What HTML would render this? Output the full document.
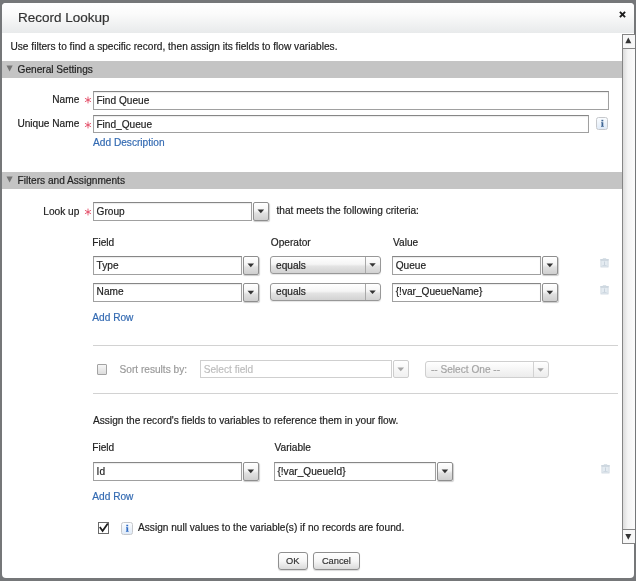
<!DOCTYPE html>
<html lang="en"><head><meta charset="utf-8"><title>Record Lookup</title>
<style>
html,body{margin:0;padding:0}
body{width:636px;height:581px;overflow:hidden;background:#757779;position:relative;font-family:"Liberation Sans",sans-serif}
#dlg{position:absolute;left:2.2px;top:2.5px;width:632.2px;height:575.2px;background:#fff;border-radius:4px;overflow:hidden}
#hdr{position:absolute;left:0;top:0;width:100%;height:30.5px;background:linear-gradient(#ffffff,#fbfbfb 35%,#e8eaeb)}
#w{position:absolute;left:-10px;top:-10px;width:656px;height:601px;background:#757779;filter:blur(.35px)}
#c{position:absolute;left:10px;top:10px;width:636px;height:581px}
.t{position:absolute;white-space:nowrap;line-height:14px;-webkit-text-stroke:0.18px}
.ab{position:absolute}
.bar{position:absolute;left:2px;width:620.3px;background:#c4c4c4}
.inp{position:absolute;box-sizing:border-box;border:1px solid #a0a0a0;border-top-color:#868686;background:#fff;box-shadow:inset 0 1px 1px rgba(0,0,0,.08)}
.inp.dis{border-color:#cfcfcf;box-shadow:none}
.ddb{position:absolute;box-sizing:border-box;border:1px solid #8e8e8e;border-radius:2px;background:linear-gradient(#ffffff,#f4f4f4 45%,#e0e0e0 60%,#cfcfcf);box-shadow:0.5px 1px 1px rgba(0,0,0,.2)}
.ddb.dis{border-color:#cdcdcd;background:linear-gradient(#fff,#f0f0f0);box-shadow:none}
.sel{position:absolute;box-sizing:border-box;border:1px solid #989898;border-radius:3px;background:linear-gradient(#ffffff,#f5f5f5 45%,#e3e3e3 58%,#d2d2d2);box-shadow:0 1px 1px rgba(0,0,0,.1)}
.sel.dis{border-color:#cfcfcf;background:linear-gradient(#fff,#ececec);box-shadow:none}
.sel .sep{position:absolute;top:0;bottom:0;width:1px;background:#a8a8a8}
.sel.dis .sep{background:#d2d2d2}
.hr{position:absolute;left:93px;width:525.3px;height:1px;background:#d2d2d2}
.cb{position:absolute;box-sizing:border-box;border:1px solid #a3a3a3;border-radius:1px;background:linear-gradient(#f6f6f6,#dddddd)}
.cbk{position:absolute;box-sizing:border-box;border:1px solid #6a6a6a;background:#fff}
.info{position:absolute;box-sizing:border-box;border:1px solid #c6c8cc;border-radius:2.5px;background:linear-gradient(#fbfdff,#dfeaf7)}
.pb{position:absolute;box-sizing:border-box;border:1px solid #8f8f8f;border-radius:3px;background:linear-gradient(#ffffff,#f6f6f6 50%,#dadada);box-shadow:0 1px 1px rgba(0,0,0,.15)}
#sb{position:absolute;left:622px;top:34px;width:12.5px;height:510px;box-sizing:border-box;border:1px solid #858585;border-right:none;background:linear-gradient(90deg,#dcdcdc,#f4f4f4 40%,#fbfbfb)}
.sbb{position:absolute;left:0;width:100%;height:13.6px;box-sizing:border-box;background:#f7f7f7}
.sbb:first-child{border-bottom:1px solid #858585}
.sbb:nth-child(2){border-top:1px solid #858585}
</style></head>
<body>
<div id="w"><div id="c">
<div id="dlg">
<div id="hdr"></div>
</div>
<div class="t" style="left:18.00px;top:10.62px;font-size:13.5px;color:#333;">Record Lookup</div>
<svg class="ab" style="left:617.7px;top:10.3px" width="9" height="9" viewBox="-4.5 -4.5 9 9"><g stroke="#1c1c1c" stroke-width="1.9"><line x1="-2.6" y1="-2.6" x2="2.6" y2="2.6"/><line x1="-2.6" y1="2.6" x2="2.6" y2="-2.6"/></g></svg>
<div id="sb"><div class="sbb" style="top:0"></div><div class="sbb" style="bottom:0"></div><svg class="ab" style="left:-1px;top:-1px" width="12" height="510"><polygon points="6.3,3.6 9.3,9.2 3.3,9.2" fill="#333"/><polygon points="3.3,500 9.3,500 6.3,505.7" fill="#333"/></svg></div>
<div class="t" style="left:10.50px;top:39.78px;font-size:10.15px;color:#222;">Use filters to find a specific record, then assign its fields to flow variables.</div>
<div class="bar" style="top:61.10px;height:16.60px"></div><svg class="ab" style="left:5.5px;top:64.70px" width="8" height="8"><polygon points="0.5,0.5 6.7,0.5 3.6,6.6" fill="#747474"/></svg><div class="t" style="left:17.50px;top:62.78px;font-size:10.15px;color:#222;">General Settings</div>
<div class="t" style="right:556.70px;top:92.78px;font-size:10.15px;color:#222;">Name</div>
<svg class="ab" style="left:83.50px;top:96.20px" width="8" height="8" viewBox="-4 -4 8 8"><g stroke="#e2405c" stroke-width="0.85" stroke-linecap="round"><line x1="0" y1="-3" x2="0" y2="3"/><line x1="-2.7" y1="-1.55" x2="2.7" y2="1.55"/><line x1="-2.7" y1="1.55" x2="2.7" y2="-1.55"/></g></svg>
<div class="inp" style="left:93.00px;top:91.20px;width:515.70px;height:18.50px"></div><div class="t" style="left:96.40px;top:93.78px;font-size:10.15px;color:#222;">Find Queue</div>
<div class="t" style="right:556.70px;top:116.78px;font-size:10.15px;color:#222;">Unique Name</div>
<svg class="ab" style="left:83.50px;top:120.80px" width="8" height="8" viewBox="-4 -4 8 8"><g stroke="#e2405c" stroke-width="0.85" stroke-linecap="round"><line x1="0" y1="-3" x2="0" y2="3"/><line x1="-2.7" y1="-1.55" x2="2.7" y2="1.55"/><line x1="-2.7" y1="1.55" x2="2.7" y2="-1.55"/></g></svg>
<div class="inp" style="left:93.00px;top:114.90px;width:496.20px;height:18.60px"></div><div class="t" style="left:96.40px;top:117.78px;font-size:10.15px;color:#222;">Find_Queue</div>
<div class="info" style="left:595.90px;top:117.30px;width:12.5px;height:12.5px"><svg width="12.5" height="12.5" viewBox="0 0 12 12" style="position:absolute;left:-1px;top:-1px"><rect x="5.2" y="2.7" width="1.8" height="1.5" fill="#3f6694"/><path d="M4.9 5.1h2.1v3.6h0.5v0.7H4.8v-0.7h0.5V5.8H4.9z" fill="#3f6694"/></svg></div>
<div class="t" style="left:93.10px;top:135.78px;font-size:10.15px;color:#336ab2;">Add Description</div>
<div class="bar" style="top:172.00px;height:16.70px"></div><svg class="ab" style="left:5.5px;top:175.60px" width="8" height="8"><polygon points="0.5,0.5 6.7,0.5 3.6,6.6" fill="#747474"/></svg><div class="t" style="left:17.50px;top:173.78px;font-size:10.15px;color:#222;">Filters and Assignments</div>
<div class="t" style="right:556.70px;top:204.78px;font-size:10.15px;color:#222;">Look up</div>
<svg class="ab" style="left:83.50px;top:208.30px" width="8" height="8" viewBox="-4 -4 8 8"><g stroke="#e2405c" stroke-width="0.85" stroke-linecap="round"><line x1="0" y1="-3" x2="0" y2="3"/><line x1="-2.7" y1="-1.55" x2="2.7" y2="1.55"/><line x1="-2.7" y1="1.55" x2="2.7" y2="-1.55"/></g></svg>
<div class="inp" style="left:93.20px;top:202.40px;width:159.10px;height:18.30px"></div><div class="t" style="left:96.60px;top:204.78px;font-size:10.15px;color:#222;">Group</div>
<div class="ddb" style="left:253.40px;top:202.40px;width:15.70px;height:18.30px"><svg width="15.70" height="18.30" style="position:absolute;left:-1px;top:-1px"><polygon points="4.55,7.55 11.15,7.55 7.85,11.25" fill="#333"/></svg></div>
<div class="t" style="left:276.50px;top:203.78px;font-size:10.15px;color:#222;">that meets the following criteria:</div>
<div class="t" style="left:92.30px;top:235.78px;font-size:10.15px;color:#222;">Field</div>
<div class="t" style="left:270.75px;top:235.78px;font-size:10.15px;color:#222;">Operator</div>
<div class="t" style="left:393.00px;top:235.78px;font-size:10.15px;color:#222;">Value</div>
<div class="inp" style="left:93.20px;top:256.25px;width:148.40px;height:18.25px"></div><div class="t" style="left:96.60px;top:258.78px;font-size:10.15px;color:#222;">Type</div>
<div class="ddb" style="left:243.00px;top:256.25px;width:15.60px;height:18.25px"><svg width="15.60" height="18.25" style="position:absolute;left:-1px;top:-1px"><polygon points="4.50,7.53 11.10,7.53 7.80,11.23" fill="#333"/></svg></div>
<div class="sel" style="left:270.20px;top:256.35px;width:110.40px;height:17.45px"><div class="sep" style="left:93.70px"></div><svg width="110.40" height="17.45" style="position:absolute;left:-1px;top:-1px"><polygon points="99.35,7.22 105.75,7.22 102.55,10.72" fill="#333"/></svg></div><div class="t" style="left:276.10px;top:258.78px;font-size:10.15px;color:#222;">equals</div>
<div class="inp" style="left:392.30px;top:256.25px;width:149.20px;height:18.25px"></div><div class="t" style="left:395.70px;top:258.78px;font-size:10.15px;color:#222;">Queue</div>
<div class="ddb" style="left:542.40px;top:256.25px;width:15.70px;height:18.25px"><svg width="15.70" height="18.25" style="position:absolute;left:-1px;top:-1px"><polygon points="4.55,7.53 11.15,7.53 7.85,11.23" fill="#333"/></svg></div>
<svg class="ab" style="left:600.10px;top:258.05px" width="9" height="10" viewBox="0 0 9 10"><rect x="0.2" y="1" width="8.6" height="1.5" fill="#ccd6df"/><rect x="2.8" y="0.1" width="3.4" height="1.1" fill="#d8e0e7"/><rect x="0.9" y="2.5" width="7.2" height="6.5" fill="#e4ebf1" stroke="#cbd5de" stroke-width="0.8"/><rect x="4" y="3.5" width="0.9" height="4" fill="#c6d1db"/><rect x="2.4" y="7.0" width="4.2" height="0.9" fill="#ccd6df"/></svg>
<div class="inp" style="left:93.20px;top:282.80px;width:148.40px;height:18.80px"></div><div class="t" style="left:96.60px;top:284.78px;font-size:10.15px;color:#222;">Name</div>
<div class="ddb" style="left:243.00px;top:282.80px;width:15.60px;height:18.80px"><svg width="15.60" height="18.80" style="position:absolute;left:-1px;top:-1px"><polygon points="4.50,7.80 11.10,7.80 7.80,11.50" fill="#333"/></svg></div>
<div class="sel" style="left:270.20px;top:282.90px;width:110.40px;height:18.00px"><div class="sep" style="left:93.70px"></div><svg width="110.40" height="18.00" style="position:absolute;left:-1px;top:-1px"><polygon points="99.35,7.50 105.75,7.50 102.55,11.00" fill="#333"/></svg></div><div class="t" style="left:276.10px;top:284.78px;font-size:10.15px;color:#222;">equals</div>
<div class="inp" style="left:392.30px;top:282.80px;width:149.20px;height:18.80px"></div><div class="t" style="left:395.70px;top:284.78px;font-size:10.15px;color:#222;">{!var_QueueName}</div>
<div class="ddb" style="left:542.40px;top:282.80px;width:15.70px;height:18.80px"><svg width="15.70" height="18.80" style="position:absolute;left:-1px;top:-1px"><polygon points="4.55,7.80 11.15,7.80 7.85,11.50" fill="#333"/></svg></div>
<svg class="ab" style="left:600.10px;top:284.60px" width="9" height="10" viewBox="0 0 9 10"><rect x="0.2" y="1" width="8.6" height="1.5" fill="#ccd6df"/><rect x="2.8" y="0.1" width="3.4" height="1.1" fill="#d8e0e7"/><rect x="0.9" y="2.5" width="7.2" height="6.5" fill="#e4ebf1" stroke="#cbd5de" stroke-width="0.8"/><rect x="4" y="3.5" width="0.9" height="4" fill="#c6d1db"/><rect x="2.4" y="7.0" width="4.2" height="0.9" fill="#ccd6df"/></svg>
<div class="t" style="left:92.30px;top:310.78px;font-size:10.15px;color:#336ab2;">Add Row</div>
<div class="hr" style="top:345.3px"></div>
<div class="cb" style="left:96.5px;top:364.1px;width:10.9px;height:10.8px"></div>
<div class="t" style="left:119.50px;top:362.78px;font-size:10.15px;color:#9a9a9a;">Sort results by:</div>
<div class="inp dis" style="left:200.30px;top:360.00px;width:191.50px;height:18.10px"></div><div class="t" style="left:203.70px;top:362.78px;font-size:10.15px;color:#bdbdbd;">Select field</div>
<div class="ddb dis" style="left:393.00px;top:360.00px;width:15.50px;height:18.10px"><svg width="15.50" height="18.10" style="position:absolute;left:-1px;top:-1px"><polygon points="4.45,7.45 11.05,7.45 7.75,11.15" fill="#a6a6a6"/></svg></div>
<div class="sel dis" style="left:425.00px;top:360.60px;width:123.50px;height:17.60px"><div class="sep" style="left:106.60px"></div><svg width="123.50" height="17.60" style="position:absolute;left:-1px;top:-1px"><polygon points="112.35,7.30 118.75,7.30 115.55,10.80" fill="#a6a6a6"/></svg></div><div class="t" style="left:430.90px;top:362.78px;font-size:10.15px;color:#a4a4a4;">-- Select One --</div>
<div class="hr" style="top:393.3px"></div>
<div class="t" style="left:93.00px;top:413.78px;font-size:10.15px;color:#222;">Assign the record's fields to variables to reference them in your flow.</div>
<div class="t" style="left:92.30px;top:440.78px;font-size:10.15px;color:#222;">Field</div>
<div class="t" style="left:274.50px;top:440.78px;font-size:10.15px;color:#222;">Variable</div>
<div class="inp" style="left:93.20px;top:462.25px;width:148.40px;height:18.25px"></div><div class="t" style="left:96.60px;top:464.78px;font-size:10.15px;color:#222;">Id</div>
<div class="ddb" style="left:243.00px;top:462.25px;width:15.60px;height:18.25px"><svg width="15.60" height="18.25" style="position:absolute;left:-1px;top:-1px"><polygon points="4.50,7.53 11.10,7.53 7.80,11.23" fill="#333"/></svg></div>
<div class="inp" style="left:274.00px;top:462.25px;width:161.60px;height:18.25px"></div><div class="t" style="left:277.40px;top:464.78px;font-size:10.15px;color:#222;">{!var_QueueId}</div>
<div class="ddb" style="left:437.00px;top:462.25px;width:15.80px;height:18.25px"><svg width="15.80" height="18.25" style="position:absolute;left:-1px;top:-1px"><polygon points="4.60,7.53 11.20,7.53 7.90,11.23" fill="#333"/></svg></div>
<svg class="ab" style="left:600.80px;top:464.05px" width="9" height="10" viewBox="0 0 9 10"><rect x="0.2" y="1" width="8.6" height="1.5" fill="#ccd6df"/><rect x="2.8" y="0.1" width="3.4" height="1.1" fill="#d8e0e7"/><rect x="0.9" y="2.5" width="7.2" height="6.5" fill="#e4ebf1" stroke="#cbd5de" stroke-width="0.8"/><rect x="4" y="3.5" width="0.9" height="4" fill="#c6d1db"/><rect x="2.4" y="7.0" width="4.2" height="0.9" fill="#ccd6df"/></svg>
<div class="t" style="left:92.30px;top:489.78px;font-size:10.15px;color:#336ab2;">Add Row</div>
<div class="cbk" style="left:97.6px;top:522.1px;width:11.5px;height:11.6px"></div><svg class="ab" style="left:97px;top:519px" width="16" height="16"><polyline points="2.8,8 5.6,11.9 10.8,4.4" fill="none" stroke="#1e1e1e" stroke-width="1.8"/></svg>
<div class="info" style="left:120.50px;top:522.40px;width:12.3px;height:12.3px"><svg width="12.3" height="12.3" viewBox="0 0 12 12" style="position:absolute;left:-1px;top:-1px"><rect x="5.2" y="2.7" width="1.8" height="1.5" fill="#2f6bc4"/><path d="M4.9 5.1h2.1v3.6h0.5v0.7H4.8v-0.7h0.5V5.8H4.9z" fill="#2f6bc4"/></svg></div>
<div class="t" style="left:138.00px;top:520.78px;font-size:10.15px;color:#222;">Assign null values to the variable(s) if no records are found.</div>
<div class="pb" style="left:277.90px;top:552.10px;width:29.90px;height:17.70px"></div><div class="t" style="left:0.00px;top:554.08px;font-size:9.3px;color:#333;left:277.90px;width:29.90px;text-align:center">OK</div>
<div class="pb" style="left:313.20px;top:552.10px;width:46.40px;height:17.70px"></div><div class="t" style="left:0.00px;top:554.08px;font-size:9.3px;color:#333;left:313.20px;width:46.40px;text-align:center">Cancel</div>
</div></div>
</body></html>
